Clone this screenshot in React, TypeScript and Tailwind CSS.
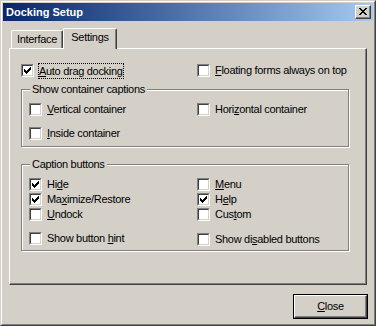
import type { ReactNode } from 'react'

const FACE = 'bg-[#d4d0c8]'

function CheckMark() {
  return (
    <svg className="block ml-[1px] mt-[1px]" width="7" height="7" viewBox="0 0 7 7" shapeRendering="crispEdges">
      <path
        fill="#000"
        d="M6 0h1v1h-1z M5 1h2v1h-2z M0 2h1v1h-1z M4 2h3v1h-3z M0 3h2v1h-2z M3 3h3v1h-3z M0 4h5v1h-5z M1 5h3v1h-3z M2 6h1v1h-1z"
      />
    </svg>
  )
}

function Box({ checked }: { checked?: boolean }) {
  return (
    <div className="w-[13px] h-[13px] shrink-0 border border-t-[#808080] border-l-[#808080] border-b-white border-r-white">
      <div className="w-full h-full bg-white border border-t-[#404040] border-l-[#404040] border-b-[#d4d0c8] border-r-[#d4d0c8]">
        {checked && <CheckMark />}
      </div>
    </div>
  )
}

function CheckItem({ checked, children, className = '' }: { checked?: boolean; children: ReactNode; className?: string }) {
  return (
    <div className={`flex items-center h-[13px] gap-[5px] ${className}`}>
      <Box checked={checked} />
      <span className="leading-[13px] whitespace-nowrap">{children}</span>
    </div>
  )
}

function Group({ title, children, className = '' }: { title: string; children: ReactNode; className?: string }) {
  return (
    <div
      className={`ml-[11px] w-[328px] border border-[#808080] shadow-[inset_1px_1px_0_#ffffff,1px_1px_0_#ffffff] ${className}`}
    >
      <div className={`-mt-[7px] ml-[8px] px-[2px] w-fit h-[13px] leading-[13px] ${FACE}`}>{title}</div>
      {children}
    </div>
  )
}

export default function App() {
  return (
    <div
      className={`w-[376px] h-[326px] ${FACE} border border-t-[#d4d0c8] border-l-[#d4d0c8] border-b-[#404040] border-r-[#404040] text-black text-[11px] tracking-[-0.3px] font-['Liberation_Sans',Arial,sans-serif]`}
    >
      <div className="h-full p-[1px] flex flex-col border border-t-white border-l-white border-b-[#808080] border-r-[#808080]">
        {/* Title bar */}
        <div className="h-[18px] shrink-0 flex items-center pl-[3px] pr-[2px] bg-linear-to-r from-[#0a246a] to-[#a6caf0]">
          <span className="flex-1 font-bold text-white leading-[18px] tracking-normal">Docking Setup</span>
          <div className={`w-[16px] h-[14px] flex items-center justify-center ${FACE} border border-t-white border-l-white border-b-[#404040] border-r-[#404040] shadow-[inset_-1px_-1px_0_#808080]`}>
            <svg className="block -mt-[1px]" width="8" height="7" viewBox="0 0 8 7" shapeRendering="crispEdges">
              <path
                fill="#000"
                d="M0 0h2v1h-2z M6 0h2v1h-2z M1 1h2v1h-2z M5 1h2v1h-2z M2 2h4v1h-4z M3 3h2v1h-2z M2 4h4v1h-4z M1 5h2v1h-2z M5 5h2v1h-2z M0 6h2v1h-2z M6 6h2v1h-2z"
              />
            </svg>
          </div>
        </div>

        {/* Tabs */}
        <div className="mt-[7px] h-[20px] shrink-0 flex items-end pl-[8px]">
          <div className="w-[52px] h-[18px] pt-[2px] text-center leading-[13px] border-t border-l border-r border-t-white border-l-white border-r-[#404040] shadow-[inset_-1px_0_0_#808080] rounded-tl-[2px] rounded-tr-[2px]">
            Interface
          </div>
          <div className={`relative z-10 w-[54px] h-[21px] -mb-[1px] pt-[2px] text-center leading-[13px] ${FACE} border-t border-l border-r border-t-white border-l-white border-r-[#404040] shadow-[inset_-1px_0_0_#808080] rounded-tl-[2px] rounded-tr-[2px]`}>
            Settings
          </div>
        </div>

        {/* Panel */}
        <div className="ml-[6px] w-[358px] h-[237px] shrink-0 pt-[15px] border border-t-white border-l-white border-b-[#404040] border-r-[#404040] shadow-[inset_-1px_-1px_0_#808080]">
          <div className="grid grid-cols-[176px_1fr] pl-[11px] h-[13px]">
            <div className="flex items-center h-[13px] gap-[4px]">
              <Box checked />
              <span className="h-[16px] leading-[14px] border border-dotted border-black whitespace-nowrap">
                <u>A</u>uto drag docking
              </span>
            </div>
            <CheckItem>
              <u>F</u>loating forms always on top
            </CheckItem>
          </div>

          <Group title="Show container captions" className="mt-[12px] pb-[6px]">
            <div className="grid grid-cols-[168px_1fr] pl-[7px] mt-[7px]">
              <CheckItem>
                <u>V</u>ertical container
              </CheckItem>
              <CheckItem>
                Hori<u>z</u>ontal container
              </CheckItem>
            </div>
            <div className="pl-[7px] mt-[11px]">
              <CheckItem>
                <u>I</u>nside container
              </CheckItem>
            </div>
          </Group>

          <Group title="Caption buttons" className="mt-[17px] pb-[4px]">
            <div className="grid grid-cols-[168px_1fr] gap-y-[2px] pl-[7px] mt-[7px]">
              <CheckItem checked>
                Hi<u>d</u>e
              </CheckItem>
              <CheckItem>
                <u>M</u>enu
              </CheckItem>
              <CheckItem checked>
                Ma<u>x</u>imize/Restore
              </CheckItem>
              <CheckItem checked>
                H<u>e</u>lp
              </CheckItem>
              <CheckItem>
                <u>U</u>ndock
              </CheckItem>
              <CheckItem>
                Cus<u>t</u>om
              </CheckItem>
            </div>
            <div className="grid grid-cols-[168px_1fr] items-start pl-[7px] mt-[11px]">
              <CheckItem>
                Show button <u>h</u>int
              </CheckItem>
              <CheckItem className="mt-[1px]">
                Show di<u>s</u>abled buttons
              </CheckItem>
            </div>
          </Group>
        </div>

        {/* Footer */}
        <div className="flex justify-end mt-[9px] pr-[5px]">
          <div className="w-[75px] h-[25px] border border-black">
            <div className="h-full flex items-center justify-center border border-t-white border-l-white border-b-[#404040] border-r-[#404040] shadow-[inset_-1px_-1px_0_#808080]">
              <span className="leading-[13px]">
                <u>C</u>lose
              </span>
            </div>
          </div>
        </div>
      </div>
    </div>
  )
}
